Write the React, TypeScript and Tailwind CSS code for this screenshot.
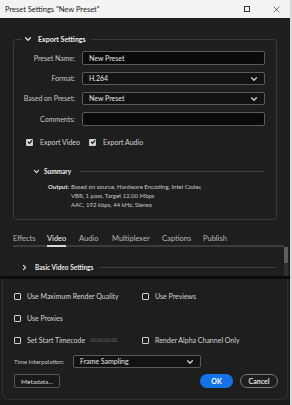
import React from "react";

const Chevron = ({ dir = "down", className = "" }: { dir?: "down" | "right"; className?: string }) => (
  <svg viewBox="0 0 10 10" className={className} fill="none" stroke="currentColor" strokeWidth={1.6} strokeLinecap="round" strokeLinejoin="round">
    {dir === "down" ? <polyline points="2,3.5 5,6.5 8,3.5" /> : <polyline points="3.5,2 6.5,5 3.5,8" />}
  </svg>
);

const Checked = ({ label }: { label: string }) => (
  <div className="flex items-center gap-[7px]">
    <div className="w-[7px] h-[7px] rounded-[1px] bg-[#cfcfcf] flex items-center justify-center">
      <svg viewBox="0 0 10 10" className="w-[6px] h-[6px]" fill="none" stroke="#1a1a1a" strokeWidth={2} strokeLinecap="round" strokeLinejoin="round">
        <polyline points="2,5.2 4.2,7.4 8,2.8" />
      </svg>
    </div>
    <span className="text-[7px] text-[#d4d4d4]">{label}</span>
  </div>
);

const Box = ({ label, extra }: { label: string; extra?: string }) => (
  <div className="flex items-center h-[8px]">
    <div className="w-[7px] h-[7px] border border-[#cfcfcf] rounded-[1px]" />
    <span className="ml-[6px] text-[7px] text-[#d4d4d4]">{label}</span>
    {extra && <span className="ml-[5px] text-[5px] text-[#6a6a6a]">{extra}</span>}
  </div>
);

const SelectBox = ({ value, className = "" }: { value: string; className?: string }) => (
  <div className={`flex items-center justify-between bg-[#121212] border border-[#5a5a5a] rounded-[2px] px-[6px] ${className}`}>
    <span className="text-[7px] text-[#e6e6e6]">{value}</span>
    <Chevron className="w-[8px] h-[8px] text-[#d0d0d0]" />
  </div>
);

const tabs = [
  { name: "Effects", w: "w-[34px]" },
  { name: "Video", w: "w-[32px]" },
  { name: "Audio", w: "w-[33px]" },
  { name: "Multiplexer", w: "w-[50px]" },
  { name: "Captions", w: "w-[41px]" },
  { name: "Publish", w: "w-[40px]" },
];

export default function App() {
  return (
    <div
      className="w-[292px] h-[405px] flex flex-col overflow-hidden border-r-2 border-[#d9d9d9] text-[7px] leading-[9px]"
      style={{ fontFamily: "Lato, 'Liberation Sans', sans-serif" }}
    >
      {/* title bar */}
      <div className="h-[18px] bg-[#f3f3f3] flex items-center pl-[5px] shrink-0">
        <span className="text-[7.5px] text-[#1c1c1c]">Preset Settings "New Preset"</span>
        <div className="ml-auto flex items-center">
          <div className="w-[6px] h-[6px] border border-[#333]" />
          <svg viewBox="0 0 10 10" className="ml-[23px] mr-[10px] w-[7px] h-[7px]" stroke="#333" strokeWidth={1}>
            <line x1="1" y1="1" x2="9" y2="9" />
            <line x1="9" y1="1" x2="1" y2="9" />
          </svg>
        </div>
      </div>

      <div className="flex-1 bg-[#1e1e1e] flex flex-col">
        {/* upper area */}
        <div className="h-[258px] shrink-0 flex flex-col">
          <fieldset className="mt-[16px] mx-[13px] border border-[#3a3a3a] rounded-[3px] px-0 pb-[10px]">
            <legend className="ml-[8px] px-[2px] flex items-center h-[10px] gap-[6px]">
              <Chevron className="w-[8px] h-[8px] text-[#e0e0e0]" />
              <span className="text-[7px] font-bold text-[#eeeeee] pr-[3px]">Export Settings</span>
            </legend>

            <div className="mt-[7px] flex flex-col gap-[7px]">
              <div className="flex items-center">
                <span className="w-[61px] text-right text-[7px] text-[#c8c8c8]">Preset Name:</span>
                <div className="ml-[7px] w-[183px] h-[14px] bg-[#0a0a0a] border border-[#5a5a5a] rounded-[2px] flex items-center px-[6px]">
                  <span className="text-[7px] text-[#e6e6e6]">New Preset</span>
                </div>
              </div>
              <div className="flex items-center">
                <span className="w-[61px] text-right text-[7px] text-[#c8c8c8]">Format:</span>
                <SelectBox value="H.264" className="ml-[7px] w-[183px] h-[13px]" />
              </div>
              <div className="flex items-center">
                <span className="w-[61px] text-right text-[7px] text-[#c8c8c8]">Based on Preset:</span>
                <SelectBox value="New Preset" className="ml-[7px] w-[183px] h-[13px]" />
              </div>
              <div className="flex items-center">
                <span className="w-[61px] text-right text-[7px] text-[#c8c8c8]">Comments:</span>
                <div className="ml-[7px] w-[183px] h-[14px] bg-[#0a0a0a] border border-[#5a5a5a] rounded-[2px]" />
              </div>
            </div>

            <div className="mt-[12px] ml-[12px] flex items-center gap-[9px] h-[8px]">
              <Checked label="Export Video" />
              <Checked label="Export Audio" />
            </div>

            <div className="mt-[21px] ml-[19px] mr-[11px] flex items-center h-[8px]">
              <Chevron className="w-[7px] h-[7px] text-[#e0e0e0]" />
              <span className="ml-[4px] text-[6.5px] font-bold text-[#eeeeee]">Summary</span>
              <div className="ml-[8px] flex-1 h-px bg-[#3e3e3e]" />
            </div>

            <div className="mt-[7px] flex text-[6px] leading-[9px] text-[#c8c8c8]">
              <span className="w-[55px] text-right font-bold text-[#e0e0e0]">Output:</span>
              <div className="ml-[2px] flex flex-col">
                <span>Based on source, Hardware Encoding, Intel Codec</span>
                <span>VBR, 1 pass, Target 12.00 Mbps</span>
                <span>AAC, 192 kbps, 44 kHz, Stereo</span>
              </div>
            </div>
          </fieldset>

          {/* tabs */}
          <div className="mt-[14px] ml-[13px] mr-[6px] flex border-b-2 border-[#3c3c3c]">
            {tabs.map((t) => (
              <div key={t.name} className={`${t.w} shrink-0 flex`}>
                <span
                  className={`text-[7.5px] leading-[10px] pb-[1px] -mb-[2px] border-b-2 ${
                    t.name === "Video" ? "text-[#f0f0f0] border-[#d8d8d8]" : "text-[#b8b8b8] border-transparent"
                  }`}
                >
                  {t.name}
                </span>
              </div>
            ))}
          </div>

          {/* scroll area */}
          <div className="flex-1 flex">
            <div className="flex-1">
              <div className="mt-[16px] ml-[21px] mr-[8px] flex items-center h-[8px]">
                <Chevron dir="right" className="w-[7px] h-[7px] text-[#e0e0e0]" />
                <span className="ml-[7px] text-[6.5px] font-bold text-[#e8e8e8]">Basic Video Settings</span>
                <div className="ml-[6px] flex-1 h-px bg-[#3e3e3e]" />
              </div>
            </div>
            <div className="w-[4px] mr-[2px] flex flex-col bg-[#303030]">
              <div className="h-[16px] bg-[#5e5e5e]" />
            </div>
          </div>
        </div>

        <div className="h-[3px] shrink-0 bg-[#0b0b0b]" />

        {/* lower panel */}
        <div className="mx-[2px] h-[121px] shrink-0 border border-[#303030] border-t-0 rounded-b-[7px] bg-[#1e1e1e] pl-[11px] pt-[13px] flex flex-col">
          <div className="flex">
            <div className="w-[128px]"><Box label="Use Maximum Render Quality" /></div>
            <Box label="Use Previews" />
          </div>
          <div className="mt-[14px] flex">
            <Box label="Use Proxies" />
          </div>
          <div className="mt-[14px] flex">
            <div className="w-[128px]"><Box label="Set Start Timecode" extra="00;00;00;00" /></div>
            <Box label="Render Alpha Channel Only" />
          </div>

          <div className="mt-[11px] flex items-center">
            <span className="w-[59px] text-[6px] text-[#c8c8c8]">Time Interpolation:</span>
            <SelectBox value="Frame Sampling" className="w-[128px] h-[13px]" />
          </div>

          <div className="mt-[6px] flex items-center pr-[9px]">
            <div className="w-[46px] h-[14px] border border-[#555] rounded-[2px] bg-[#191919] flex items-center justify-center">
              <span className="text-[6.5px] text-[#dcdcdc]">Metadata...</span>
            </div>
            <div className="ml-auto w-[33px] h-[14px] rounded-full bg-[#1473e6] flex items-center justify-center">
              <span className="text-[7px] font-bold text-white">OK</span>
            </div>
            <div className="ml-[7px] w-[38px] h-[14px] rounded-full border border-[#777] flex items-center justify-center">
              <span className="text-[7px] font-bold text-[#e0e0e0]">Cancel</span>
            </div>
          </div>
        </div>
        <div className="flex-1 bg-[#1a1a1a]" />
      </div>
    </div>
  );
}
